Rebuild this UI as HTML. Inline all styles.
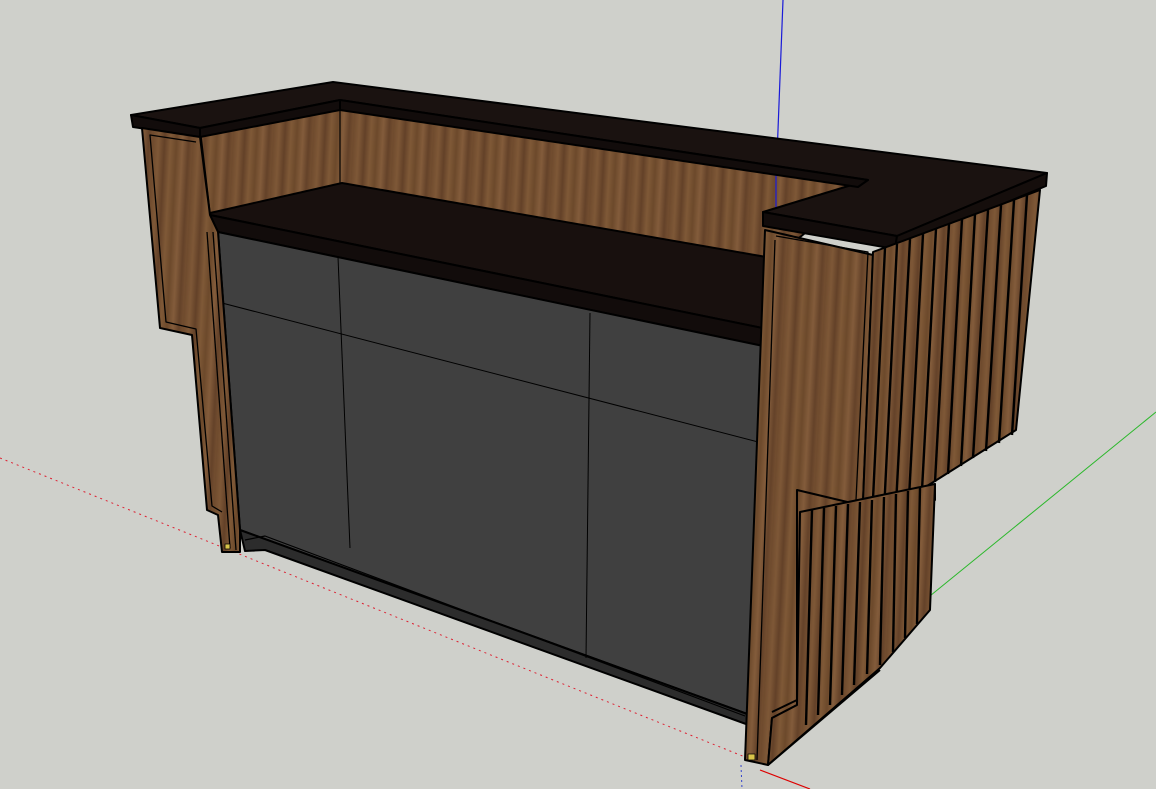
<!DOCTYPE html>
<html><head><meta charset="utf-8"><style>
html,body{margin:0;padding:0;background:#cfd0cb;}
svg{display:block}
</style></head><body>
<svg width="1156" height="789" viewBox="0 0 1156 789" xmlns="http://www.w3.org/2000/svg">
<defs>
<linearGradient id="wg" x1="0" y1="0" x2="1" y2="0">
<stop offset="0" stop-color="#6e4a2d"/><stop offset="0.15" stop-color="#7e5837"/><stop offset="0.3" stop-color="#634128"/>
<stop offset="0.45" stop-color="#7f5937"/><stop offset="0.6" stop-color="#6c492b"/><stop offset="0.75" stop-color="#835c3b"/>
<stop offset="0.9" stop-color="#644229"/><stop offset="1" stop-color="#734e30"/>
</linearGradient>
<pattern id="wood" width="40" height="200" patternUnits="userSpaceOnUse" patternTransform="skewX(-3)">
<rect width="40" height="200" fill="url(#wg)"/>
</pattern>
</defs>
<rect width="1156" height="789" fill="#cfd0cb"/>
<line x1="0" y1="458" x2="745" y2="757" stroke="#d23" stroke-width="1" stroke-dasharray="2,4"/>
<line x1="783" y1="0" x2="776" y2="182" stroke="#1a1ad8" stroke-width="1.2"/>
<line x1="925" y1="600" x2="1156" y2="412" stroke="#2bb82b" stroke-width="1"/>
<line x1="760" y1="770" x2="810" y2="789" stroke="#d00" stroke-width="1.2"/>
<line x1="741" y1="765" x2="742" y2="789" stroke="#3344cc" stroke-width="1" stroke-dasharray="2,3"/>
<g stroke="#000" stroke-width="2" stroke-linejoin="round">
<polygon points="200,130 340,105 870,180 772,260 772,340 210,215" fill="url(#wood)"/>
<line x1="340" y1="106" x2="340" y2="185" stroke-width="1.2"/>
<line x1="776" y1="175" x2="776" y2="212" stroke="#1a1ad8" stroke-width="1.2"/>
<polygon points="131,115 333,82 1047,173 897,236 763,212 868,180 340,100 200,128" fill="#1a1210"/>
<polygon points="131,115 200,128 200,137 133,127" fill="#120c0b"/>
<polygon points="200,128 340,100 340,110 200,137" fill="#120c0b"/>
<polygon points="340,100 868,180 858,187 340,110" fill="#120c0b"/>
<polygon points="210,213 342,183 772,258 772,330 210,215" fill="#18100e"/>
<polygon points="210,215 772,330 772,348 218,232" fill="#120c0b"/>
<polygon points="218,232 768,347 750,715 240,530" fill="#404040"/>
<polygon points="240,530 750,715 746,724 265,550 245,551" fill="#2c2c2c"/>
<polyline points="245,540 265,536 745,716" fill="none" stroke-width="1.2"/>
<line x1="222" y1="303" x2="766" y2="444" stroke-width="1"/>
<line x1="338" y1="257" x2="350" y2="548" stroke-width="1"/>
<line x1="590" y1="313" x2="586" y2="658" stroke-width="1"/>
<polygon points="142,128 200,137 210,215 218,232 240,530 240,552 222,552 218,515 207,510 192,335 160,328" fill="url(#wood)"/>
<polyline points="196,142 150,135 166,322 196,329 212,506 222,512" fill="none" stroke-width="1.3"/>
<line x1="207" y1="232" x2="230" y2="548" stroke-width="1.3"/>
<line x1="213" y1="232" x2="236" y2="550" stroke-width="1.3"/>
<rect x="225" y="544" width="5" height="5" fill="#d8c44a" stroke-width="0.8"/>
<polygon points="765,230 873,255 862,527 935,484 935,500 800,515 797,705 772,718 768,765 745,760" fill="url(#wood)"/>
<polyline points="776,236 868,252 856,500" fill="none" stroke-width="1.3"/>
<polyline points="860,505 797,490 797,700 772,712" fill="none" stroke-width="2"/>
<line x1="775" y1="240" x2="757" y2="760" stroke-width="1.3"/>
<polygon points="763,212 897,236 895,249 763,226" fill="#120c0b"/>
<polygon points="897,236 1047,173 1046,186 895,249" fill="#150e0c"/>
<polygon points="873,252 1040,190 1016,430 862,527" fill="url(#wood)"/>
<g stroke-width="2.4">
<line x1="885" y1="248" x2="872" y2="520"/>
<line x1="897" y1="244" x2="884" y2="512"/>
<line x1="910" y1="239" x2="896" y2="505"/>
<line x1="923" y1="234" x2="909" y2="498"/>
<line x1="936" y1="229" x2="922" y2="490"/>
<line x1="949" y1="224" x2="935" y2="482"/>
<line x1="962" y1="219" x2="948" y2="474"/>
<line x1="975" y1="214" x2="961" y2="466"/>
<line x1="988" y1="210" x2="973" y2="458"/>
<line x1="1001" y1="205" x2="986" y2="451"/>
<line x1="1014" y1="200" x2="999" y2="443"/>
<line x1="1027" y1="195" x2="1012" y2="435"/>
</g>
<polygon points="800,512 935,484 930,610 880,668 768,765 772,718 797,705" fill="url(#wood)"/>
<g stroke-width="2.4">
<line x1="812" y1="510" x2="806" y2="725"/>
<line x1="824" y1="508" x2="818" y2="715"/>
<line x1="836" y1="506" x2="830" y2="705"/>
<line x1="848" y1="504" x2="842" y2="695"/>
<line x1="860" y1="502" x2="854" y2="685"/>
<line x1="872" y1="500" x2="867" y2="674"/>
<line x1="884" y1="497" x2="880" y2="665"/>
<line x1="896" y1="494" x2="893" y2="652"/>
<line x1="908" y1="491" x2="905" y2="638"/>
<line x1="920" y1="488" x2="917" y2="624"/>
</g>
<line x1="768" y1="765" x2="880" y2="670"/>
<rect x="748" y="754" width="7" height="6" fill="#d8c44a" stroke-width="0.8"/>
</g>
</svg>
</body></html>
